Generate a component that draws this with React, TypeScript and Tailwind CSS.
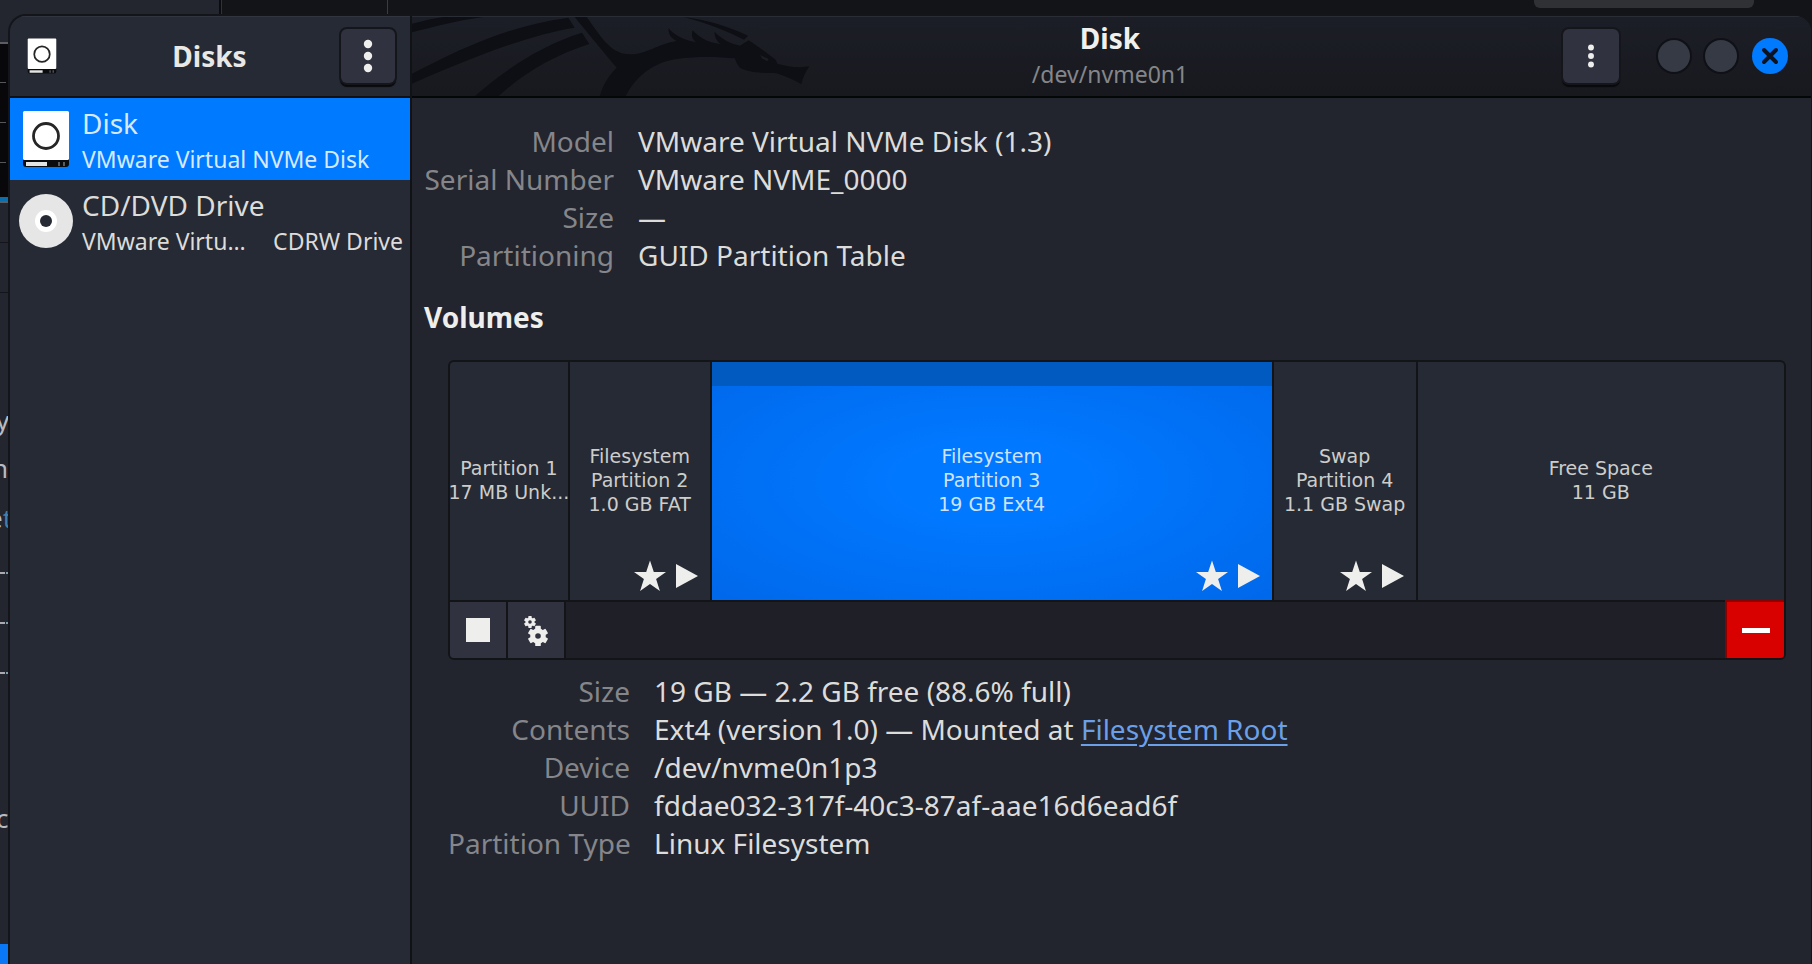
import type { ReactNode } from "react";

function DiskIcon({ className }: { className: string }) {
  return (
    <svg viewBox="0 0 48 58" className={className} aria-hidden="true">
      <path d="M1 46h46v8a3 3 0 0 1-3 3H4a3 3 0 0 1-3-3z" fill="#0b0c0f" />
      <rect x="1" y="1" width="46" height="49" rx="1.5" fill="#fff" />
      <circle cx="24" cy="26" r="12.5" fill="none" stroke="#262626" strokeWidth="2.8" />
      <rect x="4" y="52" width="21" height="4" fill="#e4e4e4" />
      <path d="M37 52v4M42 52v4" stroke="#777" strokeWidth="1.5" />
    </svg>
  );
}

function DiscIcon({ className }: { className: string }) {
  return (
    <svg viewBox="0 0 54 54" className={className} aria-hidden="true">
      <circle cx="27" cy="27" r="27" fill="#e6e6e6" />
      <circle cx="27" cy="27" r="11" fill="#fff" />
      <circle cx="27" cy="27" r="6" fill="#262a34" />
    </svg>
  );
}

function DotsIcon({ className }: { className: string }) {
  return (
    <svg viewBox="0 0 10 34" className={className} fill="#eeeeec" aria-hidden="true">
      <circle cx="5" cy="5" r="4.2" />
      <circle cx="5" cy="17" r="4.2" />
      <circle cx="5" cy="29" r="4.2" />
    </svg>
  );
}

function StarPlay() {
  return (
    <span className="absolute right-3 bottom-2 flex items-center gap-[10px]">
      <svg viewBox="0 0 32 32" className="size-8" fill="#eeeeec" aria-hidden="true">
        <path d="M16 0.5l3.8 11.6H32l-9.9 7 3.8 12L16 23.9 6.1 31.1l3.8-12L0 12.1h12.2z" />
      </svg>
      <svg viewBox="0 0 22 24" className="h-6 w-[22px]" fill="#eeeeec" aria-hidden="true">
        <path d="M0 0l22 12L0 24z" />
      </svg>
    </span>
  );
}

function Dragon() {
  return (
    <svg
      viewBox="36 48 1200 243"
      className="absolute top-0 left-0 h-[81px] w-[400px]"
      fill="#0e0f14"
      aria-hidden="true"
    >
      <path d="M36 68C70 60 100 52 130 48H250C170 58 100 78 36 94z" />
      <path d="M36 218C170 150 320 74 505 50L524 80C370 104 180 186 36 248z" />
      <path d="M218 291C310 210 420 134 546 95L568 129C460 164 370 216 290 291z" />
      <path d="M524 48H560C596 96 628 160 690 160C740 160 770 130 830 120C812 110 804 98 806 82C820 100 850 118 888 124C874 112 874 100 878 88C896 108 920 124 962 130C948 118 942 104 944 92C962 112 990 128 1020 134L1046 118C1070 134 1108 160 1128 178L1132 188C1160 196 1196 202 1228 196C1218 212 1208 230 1204 250C1180 236 1150 222 1124 216C1084 216 1046 214 1020 200C1010 190 1008 180 1004 172C960 168 900 164 830 174C760 184 706 226 674 291H598C606 256 624 226 650 200C612 156 572 106 524 48z" />
      <path d="M850 48C920 56 990 78 1044 104L1032 116C980 90 920 66 850 48z" />
      <path d="M1080 162L1106 174L1102 181L1086 172z" fill="#1b1d25" />
    </svg>
  );
}

function Gear({ cx, cy, r, hole }: { cx: number; cy: number; r: number; hole: number }) {
  return (
    <g transform={`translate(${cx} ${cy})`}>
      <circle r={(r + hole) / 2} fill="none" stroke="#eeeeec" strokeWidth={r - hole} />
      {[0, 60, 120, 180, 240, 300].map((a) => (
        <rect
          key={a}
          x={-r * 0.36}
          y={-r * 1.3}
          width={r * 0.72}
          height={r * 0.6}
          rx={r * 0.1}
          fill="#eeeeec"
          transform={`rotate(${a})`}
        />
      ))}
    </g>
  );
}

function Details({ rows, cols }: { rows: [string, ReactNode][]; cols: string }) {
  return (
    <dl className={`grid gap-x-6 text-[28px] leading-[38px] whitespace-nowrap ${cols}`}>
      {rows.map(([label, value]) => (
        <div key={label} className="contents">
          <dt className="text-right text-[#85868a]">{label}</dt>
          <dd className="text-[#dcdcda]">{value}</dd>
        </div>
      ))}
    </dl>
  );
}

const partitions = [
  { lines: ["Partition 1", "17 MB Unk..."], mounted: false, selected: false },
  { lines: ["Filesystem", "Partition 2", "1.0 GB FAT"], mounted: true, selected: false },
  { lines: ["Filesystem", "Partition 3", "19 GB Ext4"], mounted: true, selected: true },
  { lines: ["Swap", "Partition 4", "1.1 GB Swap"], mounted: true, selected: false },
  { lines: ["Free Space", "11 GB"], mounted: false, selected: false },
];

const menuButton =
  "flex items-center justify-center rounded-md bg-[#30333f] shadow-[0_0_0_2px_#15161b,0_3px_1px_1px_#08090b]";

function Dashes({ className }: { className: string }) {
  return (
    <div className={`absolute left-0 flex gap-px ${className}`}>
      <span className="h-[2px] w-[5px] bg-[#a9abb0]" />
      <span className="h-[2px] w-[3px] bg-[#7f9fb0]" />
    </div>
  );
}

function Backdrop() {
  return (
    <div className="absolute inset-0 overflow-hidden bg-[#23252f] text-[26px] leading-none text-[#b9bbc0]" aria-hidden="true">
      <div className="absolute top-0 right-0 left-[219px] h-10 border-l-2 border-[#0b0c0f] bg-[#131417]" />
      <div className="absolute top-0 left-[221px] h-10 w-px bg-[#30323a]" />
      <div className="absolute top-0 left-[387px] h-10 w-px bg-[#3a3c42]" />
      <div className="absolute top-0 right-[58px] h-2 w-[220px] rounded-b-md bg-[#303135]" />
      <div className="absolute top-[42px] left-0 h-[161px] w-3 border-y-2 border-[#5b5d62] bg-[#08080a]" />
      <div className="absolute top-[82px] left-0 h-px w-[6px] bg-[#55575c]" />
      <div className="absolute top-[122px] left-0 h-px w-[6px] bg-[#55575c]" />
      <div className="absolute top-[162px] left-0 h-px w-[6px] bg-[#55575c]" />
      <div className="absolute top-[197px] left-0 h-1 w-2 bg-[#0b6fae]" />
      <div className="absolute top-[242px] left-0 h-px w-3 bg-[#14151a]" />
      <div className="absolute top-[292px] left-0 h-px w-3 bg-[#14151a]" />
      <span className="absolute top-[407px] -left-1">y</span>
      <span className="absolute top-[455px] -left-2">n</span>
      <span className="absolute top-[505px] -left-3">
        e<span className="text-[#3f7fae]">t</span>
      </span>
      <Dashes className="top-[572px]" />
      <Dashes className="top-[622px]" />
      <Dashes className="top-[672px]" />
      <span className="absolute top-[805px] -left-1">c</span>
      <div className="absolute top-[944px] bottom-0 left-0 w-3 bg-[#0a78f5]" />
    </div>
  );
}

export default function App() {
  return (
    <div className="relative isolate flex min-h-screen flex-col overflow-hidden pt-4 pr-px pl-[10px] font-['Noto_Sans',sans-serif]">
      <Backdrop />
      <div className="relative flex flex-1 overflow-hidden rounded-t-2xl bg-[#22242e] shadow-[0_0_0_2px_#14151a]">
        <aside className="flex w-[402px] shrink-0 flex-col border-r-2 border-[#111216] bg-[#262a34]">
          <header className="flex h-[82px] items-center justify-between border-t border-b-2 border-t-[#31353f] border-b-[#0f1014] pr-[15px] pb-[2px] pl-4">
            <DiskIcon className="h-9 w-8" />
            <h1 className="pl-5 text-[28px] leading-9 font-bold text-[#e8e8e6]">Disks</h1>
            <button type="button" aria-label="Application menu" className={`${menuButton} h-[54px] w-[54px]`}>
              <DotsIcon className="h-[34px] w-[10px]" />
            </button>
          </header>
          <nav className="flex flex-col text-left">
            <button type="button" className="flex h-[82px] items-center gap-3 bg-[#007aff] pr-[7px] pl-3 text-left text-[#d7e9ff]">
              <DiskIcon className="h-[58px] w-12 shrink-0" />
              <span className="flex min-w-0 flex-1 flex-col pt-1 whitespace-nowrap">
                <span className="text-[28px] leading-9">Disk</span>
                <span className="text-[23px] leading-9">VMware Virtual NVMe Disk</span>
              </span>
            </button>
            <button type="button" className="flex h-[82px] items-center gap-[9px] pr-[7px] pl-[9px] text-left text-[#dcdcda]">
              <DiscIcon className="size-[54px] shrink-0" />
              <span className="flex min-w-0 flex-1 flex-col pt-1 whitespace-nowrap">
                <span className="text-[28px] leading-9">CD/DVD Drive</span>
                <span className="flex justify-between text-[23px] leading-9">
                  <span>VMware Virtu…</span>
                  <span>CDRW Drive</span>
                </span>
              </span>
            </button>
          </nav>
        </aside>

        <div className="flex min-w-0 flex-1 flex-col">
          <header className="relative grid h-[82px] grid-cols-[1fr_auto_1fr] items-center overflow-hidden border-t border-b-2 border-t-[#2a2d36] border-b-[#050608] bg-linear-to-b from-[#1c1e27] to-[#18191e] pr-[23px] pb-[2px]">
            <Dragon />
            <div className="col-start-2 flex flex-col items-center pl-5">
              <h2 className="text-[28px] leading-9 font-bold text-[#f0f0ee]">Disk</h2>
              <p className="text-[23px] leading-9 text-[#85868a]">/dev/nvme0n1</p>
            </div>
            <div className="flex items-center justify-end gap-[15px]">
              <button type="button" aria-label="Drive options" className={`${menuButton} mr-6 h-[54px] w-14`}>
                <DotsIcon className="h-6 w-2" />
              </button>
              <button type="button" aria-label="Minimize" className="size-8 rounded-full bg-[#353a45] shadow-[0_0_0_2px_#101116]" />
              <button type="button" aria-label="Maximize" className="size-8 rounded-full bg-[#353a45] shadow-[0_0_0_2px_#101116]" />
              <button type="button" aria-label="Close" className="flex size-9 items-center justify-center rounded-full bg-[#007aff]">
                <svg viewBox="0 0 18 18" className="size-[18px]" aria-hidden="true">
                  <path d="M3 3l12 12M15 3L3 15" stroke="#0c1320" strokeWidth="4" strokeLinecap="round" />
                </svg>
              </button>
            </div>
          </header>

          <main className="flex flex-1 flex-col pt-6 pr-[25px] pl-3">
            <Details
              cols="grid-cols-[190px_1fr]"
              rows={[
                ["Model", "VMware Virtual NVMe Disk (1.3)"],
                ["Serial Number", "VMware NVME_0000"],
                ["Size", "—"],
                ["Partitioning", "GUID Partition Table"],
              ]}
            />
            <h3 className="mt-6 text-[28px] leading-[38px] font-bold text-[#eeeeec]">Volumes</h3>

            <section aria-label="Volumes" className="mt-6 ml-6 overflow-hidden rounded-md border-2 border-[#131418] bg-[#131418]">
              <div className="grid h-[238px] grid-cols-[118fr_140fr_561fr_142fr_367fr] gap-[2px] font-['DejaVu_Sans',sans-serif] text-[19px] leading-6">
                {partitions.map((p) => (
                  <button
                    key={p.lines.join()}
                    type="button"
                    aria-pressed={p.selected}
                    className={
                      p.selected
                        ? "relative flex min-w-0 flex-col items-center justify-center bg-[radial-gradient(ellipse_at_center,#0078ff_25%,#0068ea_100%)] pb-[2px] text-[#cfe3ff]"
                        : "relative flex min-w-0 flex-col items-center justify-center bg-[#262a34] pb-[2px] text-[#cdcdcb]"
                    }
                  >
                    {p.selected && <span className="absolute inset-x-0 top-0 h-6 bg-[#005abf]" />}
                    {p.lines.map((line) => (
                      <span key={line} className="whitespace-nowrap">
                        {line}
                      </span>
                    ))}
                    {p.mounted && <StarPlay />}
                  </button>
                ))}
              </div>
              <div className="flex h-[58px] gap-[2px] border-t-2 border-[#131418] bg-[#1e1f27]">
                <button type="button" aria-label="Unmount" className="flex w-14 items-center justify-center bg-[#30333f] shadow-[0_0_0_2px_#131418]">
                  <span className="size-6 bg-[#eeeeec]" />
                </button>
                <button type="button" aria-label="Partition options" className="flex w-14 items-center justify-center bg-[#30333f] shadow-[0_0_0_2px_#131418]">
                  <svg viewBox="0 0 30 32" className="h-8 w-[30px]" aria-hidden="true">
                    <Gear cx={9} cy={8} r={4.6} hole={1.8} />
                    <Gear cx={17} cy={22} r={7.8} hole={2.8} />
                  </svg>
                </button>
                <button type="button" aria-label="Delete partition" className="ml-auto flex w-[57px] items-center justify-center bg-[#d90000] shadow-[0_0_0_2px_#8d0000]">
                  <span className="h-[5px] w-7 bg-white" />
                </button>
              </div>
            </section>

            <div className="mt-3 ml-6">
              <Details
                cols="grid-cols-[182px_1fr]"
                rows={[
                  ["Size", "19 GB — 2.2 GB free (88.6% full)"],
                  [
                    "Contents",
                    <>
                      Ext4 (version 1.0) — Mounted at{" "}
                      <a href="#root" className="text-[#6ba0e8] underline decoration-2 underline-offset-4">
                        Filesystem Root
                      </a>
                    </>,
                  ],
                  ["Device", "/dev/nvme0n1p3"],
                  ["UUID", "fddae032-317f-40c3-87af-aae16d6ead6f"],
                  ["Partition Type", "Linux Filesystem"],
                ]}
              />
            </div>
          </main>
        </div>
      </div>
    </div>
  );
}
